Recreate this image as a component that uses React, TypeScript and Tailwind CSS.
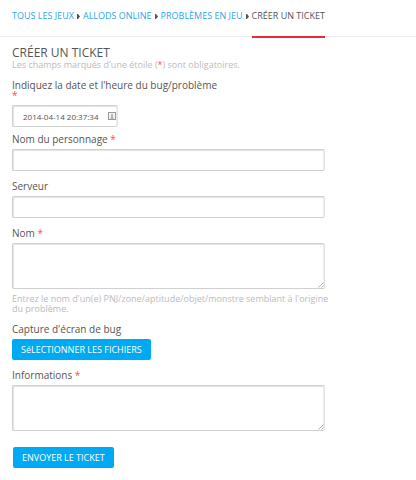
import type { ReactNode } from 'react'
import { clsx } from 'clsx'

const CRUMBS = ['Tous les jeux', 'Allods Online', 'Problèmes en jeu']

const BOX =
  'block rounded-xs border border-[#d0d0d0] border-r-[#e2e2e2] bg-white shadow-[inset_1px_1px_1px_#e4e4e4,inset_-1px_0_0_#eeeeee] outline-none'

const BUTTON =
  'h-[21px] rounded-xs bg-[#00aaf2] px-[9px] text-[9px] text-white'

const Star = () => <span className="text-[#ff4b4b]">*</span>

const Separator = () => (
  <svg viewBox="0 0 3 5" className="h-[5px] w-[3px] shrink-0" aria-hidden="true">
    <path d="M0 0H1L3 2.5L1 5H0Z" fill="#555555" />
  </svg>
)

const Breadcrumb = () => (
  <nav className="flex h-[37px] items-stretch gap-[3px] border-b border-[#eeeeee] pl-3 text-[9px] leading-[10px] whitespace-nowrap uppercase">
    {CRUMBS.map((crumb) => (
      <div key={crumb} className="flex items-center gap-[3px] pb-1">
        <a href="#" className="text-[#2ba6ee]">
          {crumb}
        </a>
        <Separator />
      </div>
    ))}
    <span className="-mb-0.5 flex items-center border-b-2 border-[#ea2839] pb-1">
      Créer un ticket
    </span>
  </nav>
)

type FieldProps = {
  id: string
  label: string
  required?: boolean
  className?: string
  children: ReactNode
}

const Field = ({ id, label, required, className, children }: FieldProps) => (
  <div className={clsx('flex flex-col items-start gap-[5px]', className)}>
    <label htmlFor={id} className="max-w-[208px] text-[10px] leading-[10px]">
      {label} {required && <Star />}
    </label>
    {children}
  </div>
)

const TextArea = ({ id }: { id: string }) => (
  <div className="relative w-full">
    <textarea id={id} className={clsx(BOX, 'h-[46px] w-full resize-none')} />
    <svg
      viewBox="0 0 6 6"
      className="pointer-events-none absolute right-px bottom-px h-1.5 w-1.5"
      aria-hidden="true"
    >
      <path d="M0.5 5.5L5.5 0.5M3.5 5.5L5.5 3.5" stroke="#999999" strokeWidth="0.8" />
    </svg>
  </div>
)

const DateIcon = () => (
  <svg
    viewBox="0 0 8 8"
    className="pointer-events-none absolute top-[7px] right-[2px] h-2 w-2"
    aria-hidden="true"
  >
    <rect x="0.5" y="0.5" width="7" height="7" fill="#f5f5f5" stroke="#999999" />
    <path d="M4 2V5M2.5 6H5.5" stroke="#777777" />
  </svg>
)

export default function App() {
  return (
    <div className="bg-white font-['Open_Sans',sans-serif] text-[#555555]">
      <Breadcrumb />
      <main className="max-w-[325px] pt-[9px] pl-3">
        <h1 className="text-[12px] leading-[14px] uppercase">Créer un ticket</h1>
        <p className="text-[9px] leading-[10px] text-[#bbbbbb]">
          Les champs marqués d&apos;une étoile (<Star />) sont obligatoires.
        </p>
        <form className="pt-[10px]" onSubmit={(e) => e.preventDefault()}>
          <Field
            id="date"
            label="Indiquez la date et l'heure du bug/problème"
            required
          >
            <div className="relative">
              <input
                id="date"
                type="text"
                defaultValue="2014-04-14 20:37:34"
                className={clsx(BOX, 'h-[22px] w-[106px] pl-[10px] text-[8px]')}
              />
              <DateIcon />
            </div>
          </Field>
          <Field id="character" label="Nom du personnage" required className="mt-[7px]">
            <input id="character" type="text" className={clsx(BOX, 'h-[22px] w-full')} />
          </Field>
          <Field id="server" label="Serveur" className="mt-[10px]">
            <input id="server" type="text" className={clsx(BOX, 'h-[22px] w-full')} />
          </Field>
          <Field id="name" label="Nom" required className="mt-[10px]">
            <TextArea id="name" />
            <p className="-mr-4 text-[9px] leading-[10px] text-[#bbbbbb]">
              Entrez le nom d&apos;un(e) PNJ/zone/aptitude/objet/monstre semblant à
              l&apos;origine du problème.
            </p>
          </Field>
          <Field id="files" label="Capture d'écran de bug" className="mt-[10px]">
            <button id="files" type="button" className={BUTTON}>
              SéLECTIONNER LES FICHIERS
            </button>
          </Field>
          <Field id="infos" label="Informations" required className="mt-[10px]">
            <TextArea id="infos" />
          </Field>
          <button type="submit" className={clsx(BUTTON, 'mt-4 ml-px uppercase')}>
            Envoyer le ticket
          </button>
        </form>
      </main>
    </div>
  )
}
